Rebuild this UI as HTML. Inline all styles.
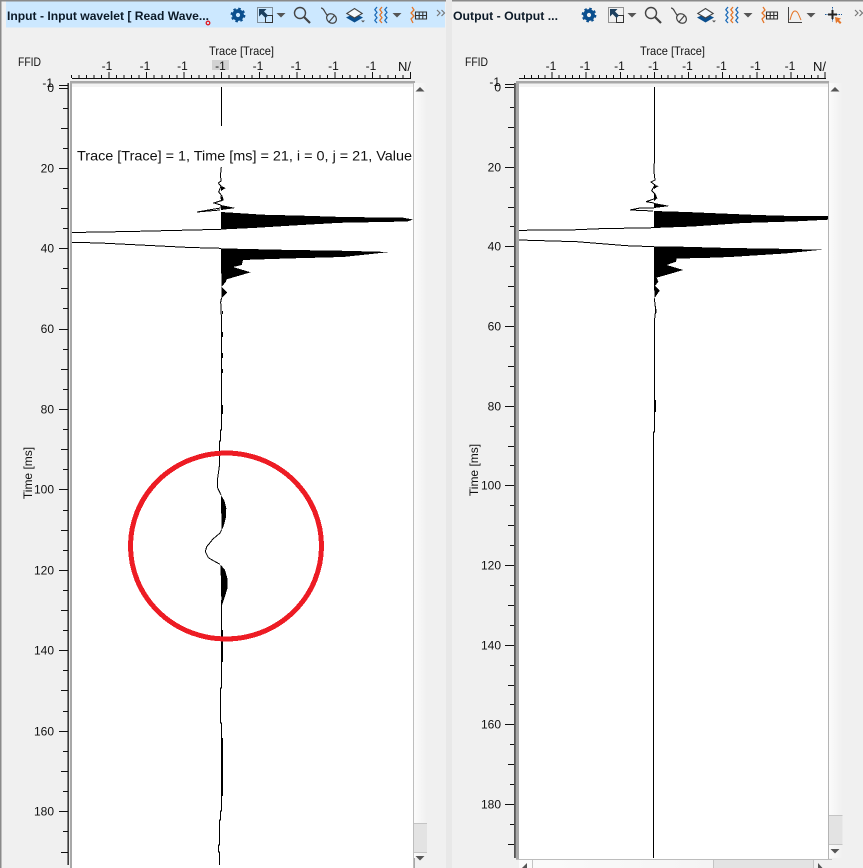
<!DOCTYPE html>
<html>
<head>
<meta charset="utf-8">
<title>Input and Output wavelet</title>
<style>
html,body{margin:0;padding:0;background:#f0f0f0;width:863px;height:868px;overflow:hidden}
svg{display:block;position:absolute;left:0;top:0}
text{font-family:"Liberation Sans",sans-serif;font-size:12px;fill:#111}
.b{font-weight:bold;fill:#0c1a28}
.e{text-anchor:end}
.m{text-anchor:middle}
</style>
</head>
<body>
<svg width="863" height="868" viewBox="0 0 863 868" xmlns="http://www.w3.org/2000/svg">
<defs>
<linearGradient id="sb" x1="0" x2="1" y1="0" y2="0"><stop offset="0" stop-color="#fbfbfb"/><stop offset="1" stop-color="#f0f0f0"/></linearGradient>
<clipPath id="cl"><rect x="72" y="87" width="341" height="781"/></clipPath>
<clipPath id="cr"><rect x="519" y="87" width="309" height="772"/></clipPath>
<g id="gear"><circle r="4" fill="none" stroke="#0b4f8e" stroke-width="3.8"/><circle r="6.300" fill="none" stroke="#0b4f8e" stroke-width="2.200" stroke-dasharray="2.500 2.450"/></g>
<g id="box"><rect x="0.500" y="0.500" width="15" height="15" fill="none" stroke="#333" stroke-width="1" stroke-dasharray="1 1"/><rect x="8.500" y="8.500" width="7" height="7" fill="none" stroke="#333"/><path d="M2 2h7.500l-2.500 2.500 4 4-2.500 2.500-4-4L2 9.500z" fill="#1c3f5e"/></g>
<path id="dd" d="M-4.500-2h9L0 2.500z" fill="#555"/>
<g id="mag"><circle cx="6" cy="6" r="5.500" fill="none" stroke="#444" stroke-width="1.400"/><path d="M10 10l6 6" stroke="#444" stroke-width="2.200" fill="none"/></g>
<g id="mouse" fill="none" stroke="#444" stroke-width="1.200"><path d="M0 1c2 0 3 2 4 4s2 3 3 4"/><ellipse cx="10.500" cy="11.500" rx="5.200" ry="4.400" transform="rotate(40 10.500 11.500)"/><path d="M8 15l5.500-6.500"/></g>
<g id="layers"><path d="M0 10.500l8.500-4 8.500 4-8.500 5z" fill="#0b4f8e"/><path d="M15 13.500h4l-2 2z" fill="#555"/><path d="M0.800 6.500L8.500 1.500l7.700 5L8.500 11z" fill="#f4f8fb" stroke="#444" stroke-width="1.100"/></g>
<g id="waves" fill="none" stroke-width="1.300" stroke-linejoin="round"><path d="M3 0L0.800 2.700 3 5.400 0.800 8 3 10.700 0.800 13.400 3 16" stroke="#1e6cb8"/><path d="M8 0L5.800 2.700 8 5.400 5.800 8 8 10.700 5.800 13.400 8 16" stroke="#e4762a"/><path d="M13 0L10.800 2.700 13 5.400 10.800 8 13 10.700 10.800 13.400 13 16" stroke="#1e6cb8"/></g>
<g id="tbl"><path d="M2 0L4 3 1 6 4 9 1 12 3 16" fill="none" stroke="#e4762a" stroke-width="1.300" stroke-linejoin="round"/><path d="M5.500 5h11v7h-11zM5.500 8.500h11M9.200 5v7M12.800 5v7" fill="none" stroke="#333" stroke-width="1.100"/></g>
<path id="chev" d="M0 0l3 3-3 3M4.500 0l3 3-3 3" fill="none" stroke="#777" stroke-width="1.200"/>
</defs>

<!-- panel chrome -->
<rect x="0" y="0" width="863" height="868" fill="#f0f0f0"/>
<rect x="0" y="0" width="446" height="1.500" fill="#8a8a8a"/>
<rect x="0" y="0" width="1.500" height="868" fill="#8a8a8a"/>
<rect x="451" y="0" width="412" height="1.500" fill="#8a8a8a"/>
<rect x="446" y="0" width="6" height="868" fill="#e8e8e8"/>
<rect x="6" y="1.500" width="439" height="26" fill="#cce8ff"/>

<!-- titles -->
<text class="b" x="7" y="20" textLength="202" lengthAdjust="spacingAndGlyphs">Input - Input wavelet [ Read Wave...</text>
<circle cx="208" cy="23" r="1.800" fill="none" stroke="#e01b24" stroke-width="1.300"/>
<text class="b" x="453" y="20" textLength="105" lengthAdjust="spacingAndGlyphs">Output - Output ...</text>

<!-- toolbar left -->
<use href="#gear" x="238" y="15"/>
<use href="#box" x="257" y="7"/>
<use href="#dd" x="281" y="15"/>
<use href="#mag" x="294" y="7"/>
<use href="#mouse" x="321" y="7"/>
<use href="#layers" x="346" y="7"/>
<use href="#waves" x="374" y="7"/>
<use href="#dd" x="397" y="15"/>
<use href="#tbl" x="410" y="7"/>
<use href="#chev" x="437" y="10"/>
<!-- toolbar right -->
<use href="#gear" x="589" y="15"/>
<use href="#box" x="608" y="7"/>
<use href="#dd" x="632" y="15"/>
<use href="#mag" x="645" y="7"/>
<use href="#mouse" x="671" y="7"/>
<use href="#layers" x="697" y="7"/>
<use href="#waves" x="725" y="7"/>
<use href="#dd" x="748" y="15"/>
<use href="#tbl" x="761" y="7"/>
<path d="M788.500 7v15.500H802" fill="none" stroke="#444" stroke-width="1"/>
<path d="M790 20c1-3 2-9 5-9s4 5 6 9" fill="none" stroke="#e4762a" stroke-width="1"/>
<use href="#dd" x="811" y="15"/>
<path d="M825 14.500h4M836 14.500h6M832.500 7v3M832.500 19v3" stroke="#1e5c9c" stroke-width="1" stroke-dasharray="1.500 1"/>
<path d="M828 14.500h9M832.500 10v9" stroke="#222" stroke-width="2"/>
<path d="M835 17l6 1.500-2 1.500 2.500 2.500-1.500 1.500-2.500-2.500-1.500 2z" fill="#e4762a"/>
<use href="#chev" x="855" y="10"/>

<!-- LEFT PLOT -->
<rect x="70" y="81" width="345" height="787" fill="#a8a8a8"/>
<rect x="72" y="83.500" width="341" height="4" fill="#f3f3f3"/>
<rect x="72" y="87" width="341" height="781" fill="#fff"/>
<rect x="413" y="83" width="1" height="785" fill="#bdbdbd"/>
<rect x="414" y="83" width="13" height="775" fill="url(#sb)"/>
<rect x="414" y="823" width="13" height="30" fill="#e3e3e3"/>
<path d="M414 823.500h13M414 852.500h13" stroke="#c4c4c4"/>
<path d="M415.500 91.500h9l-4.500-4.500z" fill="#555"/>
<path d="M415.500 856h9l-4.500 4.500z" fill="#555"/>

<text x="209" y="55" textLength="65" lengthAdjust="spacingAndGlyphs">Trace [Trace]</text>
<text x="18" y="66" textLength="23" lengthAdjust="spacingAndGlyphs">FFID</text>
<rect x="212" y="60" width="17" height="10" fill="#d2d2d2"/>
<text class="m" x="107" y="70">-1</text><text class="m" x="145" y="70">-1</text><text class="m" x="182.500" y="70">-1</text><text class="m" x="220.500" y="70">-1</text><text class="m" x="258" y="70">-1</text><text class="m" x="296" y="70">-1</text><text class="m" x="333.500" y="70">-1</text><text class="m" x="371" y="70">-1</text>
<text class="e" x="411" y="71" style="font-size:13px">N/</text>

<path fill="none" stroke="#111" stroke-width="1" shape-rendering="crispEdges" d="M72 78.500H411M109 72v6M146.700 72v6M184 72v6M221.700 72v6M259.500 72v6M297.200 72v6M335 72v6M372.700 72v6M410.500 72v6M71.400 75v3M78.900 75v3M86.400 75v3M93.900 75v3M101.500 75v3M116.500 75v3M124.100 75v3M131.600 75v3M139.200 75v3M154.200 75v3M161.800 75v3M169.300 75v3M176.900 75v3M191.500 75v3M199.100 75v3M206.600 75v3M214.200 75v3M229.200 75v3M236.800 75v3M244.300 75v3M251.900 75v3M267 75v3M274.600 75v3M282.100 75v3M289.700 75v3M304.700 75v3M312.300 75v3M319.900 75v3M327.400 75v3M342.500 75v3M350.100 75v3M357.600 75v3M365.200 75v3M380.200 75v3M387.800 75v3M395.400 75v3M402.900 75v3"/>

<path fill="none" stroke="#111" stroke-width="1" shape-rendering="crispEdges" d="M59 85.500h9M59 88.500h9M59 168.500h9M59 248.500h9M59 329.500h9M59 409.500h9M59 489.500h9M59 570.500h9M59 650.500h9M59 731.500h9M59 811.500h9M61 128.500h7M61 208.500h7M61 288.500h7M61 369.500h7M61 449.500h7M61 530.500h7M61 610.500h7M61 690.500h7M61 771.500h7M61 852.500h7M63 108.500h5M63 148.500h5M63 188.500h5M63 228.500h5M63 268.500h5M63 308.500h5M63 349.500h5M63 389.500h5M63 429.500h5M63 469.500h5M63 510.500h5M63 550.500h5M63 590.500h5M63 630.500h5M63 670.500h5M63 711.500h5M63 751.500h5M63 791.500h5M63 831.500h5"/>
<rect x="67.500" y="83" width="1.300" height="782" fill="#111"/>

<text class="e" x="53" y="87">-1</text>
<text class="e" x="54" y="92">0</text>
<text class="e" x="54" y="172.500">20</text><text class="e" x="54" y="252.500">40</text><text class="e" x="54" y="333">60</text><text class="e" x="54" y="413.500">80</text><text class="e" x="54" y="493.500">100</text><text class="e" x="54" y="574.500">120</text><text class="e" x="54" y="654.500">140</text><text class="e" x="54" y="735.500">160</text><text class="e" x="54" y="815.500">180</text>
<text class="m" transform="translate(32 473) rotate(-90)">Time [ms]</text>

<g clip-path="url(#cl)" shape-rendering="crispEdges">
<path d="M221.500 87V126" fill="none" stroke="#000"/>
<path fill="none" stroke="#000" d="M221.300 167L220.500 175 221 181 218.300 183 221 186 218.700 192 222 196 223 200 214 203 220.700 205M220.500 208L197 212 220 210M221 229.300L180 230.300 130 231.500 72 232.500M72 242.300L100 243 150 245.500 190 247.500 221 248.300M221.500 298L220.700 302 221.500 320V430H220.500V441H219.500V465L217.700 478 217.700 488 221 495M221.500 530L220 533 213 539 206.700 546.700 205.300 551.700 208.300 557.700 214 561 220 564.300M221.500 600V688H220.500V723H221.500V811H220.500V820H219.500V845H218.500V852H219.500V865"/>
<path fill="#000" d="M220.500 205L236 208 221 210zM221 186L225.700 188 221 191zM220.500 196L223.500 199 221 202z"/>
<path fill="#000" d="M221 212L236.700 213 263 214.700 303 215.700 343 217 403 217.700 413 219.500 407 221.500 340 222.800 293 225.500 253 228 221 229.500z"/>
<path fill="#000" d="M221 248.300L246.700 249 293 250 340 250.700 390 252 343 257 286.700 258.500 243 260 241.700 265 233 267 250.700 272.300 226.700 279.300 225.700 282 221.500 287 227.300 292.700 221.500 298z"/>
<path fill="#000" d="M221 495L224.500 501 226.300 508 226 517 224 525 221.500 531z"/>
<path fill="#000" d="M220.500 564.500L225 570 227.300 578 227.500 588 224.500 598 221.500 607z"/>
<path fill="#000" d="M222 311h1v3h-1zM222 332h1v5h-1zM222 353h1v5h-1zM222 369h1v4h-1zM222 405h1v9h-1z"/>
<rect x="222" y="630" width="1" height="32"/>
<rect x="222" y="738" width="1" height="58"/>
</g>
<text x="77" y="160.500" style="font-size:14px" textLength="335" lengthAdjust="spacingAndGlyphs">Trace [Trace] = 1, Time [ms] = 21, i = 0, j = 21, Value</text>
<ellipse cx="226" cy="546" rx="95.500" ry="93" fill="none" stroke="#ed1c24" stroke-width="5" shape-rendering="crispEdges"/>

<!-- RIGHT PLOT -->
<rect x="516" y="81" width="313" height="778" fill="#a8a8a8"/>
<rect x="519" y="83.500" width="309" height="4" fill="#f3f3f3"/>
<rect x="519" y="87" width="309" height="772" fill="#fff"/>
<rect x="828" y="83" width="1" height="776" fill="#b4b4b4"/>
<rect x="829" y="83" width="13.500" height="775" fill="url(#sb)"/>
<rect x="829" y="815" width="13.500" height="30" fill="#e3e3e3"/>
<path d="M829 815.500h13.500M829 844.500h13.500" stroke="#c4c4c4"/>
<path d="M830.500 91.500h9l-4.500-4.500z" fill="#555"/>
<path d="M830.500 849h9l-4.500 4.500z" fill="#555"/>
<rect x="519" y="859" width="310" height="9" fill="url(#sb)"/>
<rect x="516" y="859" width="316" height="1" fill="#bcbcbc"/>
<rect x="713" y="860" width="100" height="8" fill="#e3e3e3"/>
<path d="M713.500 860v8M813.500 860v8M532.500 860v8" stroke="#c4c4c4"/>
<path d="M527 863v5h-5z" fill="#555"/>
<path d="M818 863l4.500 5H818z" fill="#555"/>

<text x="640" y="55" textLength="65" lengthAdjust="spacingAndGlyphs">Trace [Trace]</text>
<text x="465" y="66" textLength="23" lengthAdjust="spacingAndGlyphs">FFID</text>
<text class="m" x="551" y="70">-1</text><text class="m" x="585" y="70">-1</text><text class="m" x="619.500" y="70">-1</text><text class="m" x="653.500" y="70">-1</text><text class="m" x="687.500" y="70">-1</text><text class="m" x="721.500" y="70">-1</text><text class="m" x="755.500" y="70">-1</text><text class="m" x="790" y="70">-1</text>
<text class="e" x="826" y="71" style="font-size:13px">N/</text>

<path fill="none" stroke="#111" stroke-width="1" shape-rendering="crispEdges" d="M519 78.500H826M552 72v6M586 72v6M620.400 72v6M654.500 72v6M688.600 72v6M722.700 72v6M756.800 72v6M790.900 72v6M825 72v6M524.700 75v3M531.500 75v3M538.400 75v3M545.200 75v3M558.800 75v3M565.600 75v3M572.500 75v3M579.300 75v3M592.900 75v3M599.700 75v3M606.600 75v3M613.400 75v3M627.300 75v3M634 75v3M641 75v3M647.700 75v3M661.300 75v3M668.100 75v3M675 75v3M681.800 75v3M695.400 75v3M702.300 75v3M709.100 75v3M715.900 75v3M729.500 75v3M736.300 75v3M743.200 75v3M750 75v3M763.600 75v3M770.500 75v3M777.300 75v3M784.100 75v3M797.700 75v3M804.500 75v3M811.400 75v3M818.200 75v3"/>

<path fill="none" stroke="#111" stroke-width="1" shape-rendering="crispEdges" d="M505 84.500h9M505 87.500h9M505 167.500h9M505 246.500h9M505 326.500h9M505 406.500h9M505 485.500h9M505 565.500h9M505 645.500h9M505 724.500h9M505 804.500h9M508 127.500h6M508 207.500h6M508 286.500h6M508 366.500h6M508 446.500h6M508 525.500h6M508 605.500h6M508 685.500h6M508 764.500h6M508 844.500h6M510 107.500h4M510 147.500h4M510 187.500h4M510 226.500h4M510 266.500h4M510 306.500h4M510 346.500h4M510 386.500h4M510 426.500h4M510 465.500h4M510 505.500h4M510 545.500h4M510 585.500h4M510 625.500h4M510 665.500h4M510 704.500h4M510 744.500h4M510 784.500h4M510 824.500h4"/>
<rect x="514.300" y="83" width="1.300" height="775" fill="#111"/>

<text class="e" x="500" y="86">-1</text>
<text class="e" x="501" y="91.500">0</text>
<text class="e" x="501" y="171.500">20</text><text class="e" x="501" y="250.500">40</text><text class="e" x="501" y="330.500">60</text><text class="e" x="501" y="410.500">80</text><text class="e" x="501" y="489.500">100</text><text class="e" x="501" y="569.500">120</text><text class="e" x="501" y="649.500">140</text><text class="e" x="501" y="728.500">160</text><text class="e" x="501" y="808.500">180</text>
<text class="m" transform="translate(478 470) rotate(-90)">Time [ms]</text>

<g clip-path="url(#cr)" shape-rendering="crispEdges">
<path fill="none" stroke="#000" d="M654.500 87V160L653.800 170 655 180 651 182 655 185 651.700 190.700 655 194 656.700 198 646 201.700 654 203M654 208L640 208 630 210 653 211M654 227.700L600 228.700 570 230 519 230.300M519 240L576.700 241.700 626.700 245.700 654 246.700M654.300 298.300L655.700 310 654.500 320V432H653.500V858"/>
<path fill="#000" d="M654 203L670 206 654 208zM654 185L658.700 186 654 189zM654 193L657 198 654 201z"/>
<path fill="#000" d="M654 211L686.700 212 716.700 213.300 756.700 215 793 216 828 216V219.700L793 221.500 743 223 693 226.500 654 228z"/>
<path fill="#000" d="M654 246.700L681.700 246.700 730 248 776.700 248.700 822 249.700 785 253.500 730 257 703 258 676.700 258.500 676 261.700 666.700 265 683.300 270 656.700 277.700 658.300 281.700 655 286 659.700 290.700 654.300 298.300z"/>
<path fill="#000" d="M655 309h1.500v4H655zM655 400h1v12h-1z"/>
</g>
</svg>
</body>
</html>
